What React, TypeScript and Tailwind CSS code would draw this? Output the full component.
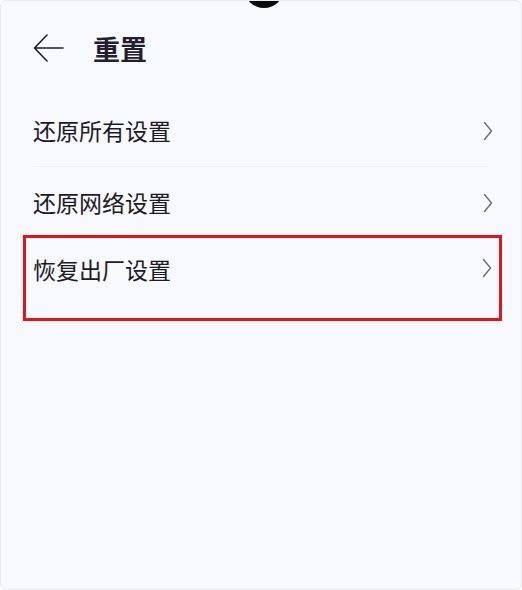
import React from "react";

function Chevron() {
  return (
    <svg width="10" height="20" viewBox="0 0 10 20" fill="none" className="shrink-0">
      <path d="M1.5 1.5 L8.5 10 L1.5 18.5" stroke="#6e6b7a" strokeWidth="1.4" strokeLinecap="round" strokeLinejoin="round" />
    </svg>
  );
}

function Row({ label }: { label: string }) {
  return (
    <div className="flex items-center justify-between h-[71px] pl-[32px] pr-[28px]">
      <span className="text-[23px] leading-none text-[#1c1a26]">{label}</span>
      <Chevron />
    </div>
  );
}

export default function App() {
  return (
    <div
      className="relative w-[522px] h-[590px] overflow-hidden bg-[#f8f9fd] border border-[#e8e9ee] rounded-[6px]"
      style={{ fontFamily: '"Noto Sans CJK SC", "Noto Sans", sans-serif' }}
    >
      <div className="absolute left-[243px] top-[-34px] w-[40px] h-[41px] rounded-full bg-[#0b0b0b]" />
      <div className="flex items-center h-[94px] pl-[32px] pb-[0px]">
        <svg width="31" height="32" viewBox="0 0 31 32" fill="none">
          <path d="M30 16 H2 M14 3 L1.5 16 L14 29" stroke="#211d2c" strokeWidth="1.6" strokeLinecap="round" strokeLinejoin="round" />
        </svg>
        <span className="ml-[29px] text-[27px] font-bold leading-none text-[#241e33]">重置</span>
      </div>
      <div className="flex flex-col">
        <Row label="还原所有设置" />
        <div className="mx-[32px] h-px bg-[#eceef3]" />
        <Row label="还原网络设置" />
        <div className="ml-[22px] mr-[19px] mt-[-3px] border-[3px] border-[#e1141a] h-[86px] flex items-start justify-between pl-[7px] pr-[7px] pt-[20px]">
          <span className="text-[23px] leading-none text-[#1c1a26]">恢复出厂设置</span>
          <Chevron />
        </div>
      </div>
    </div>
  );
}
